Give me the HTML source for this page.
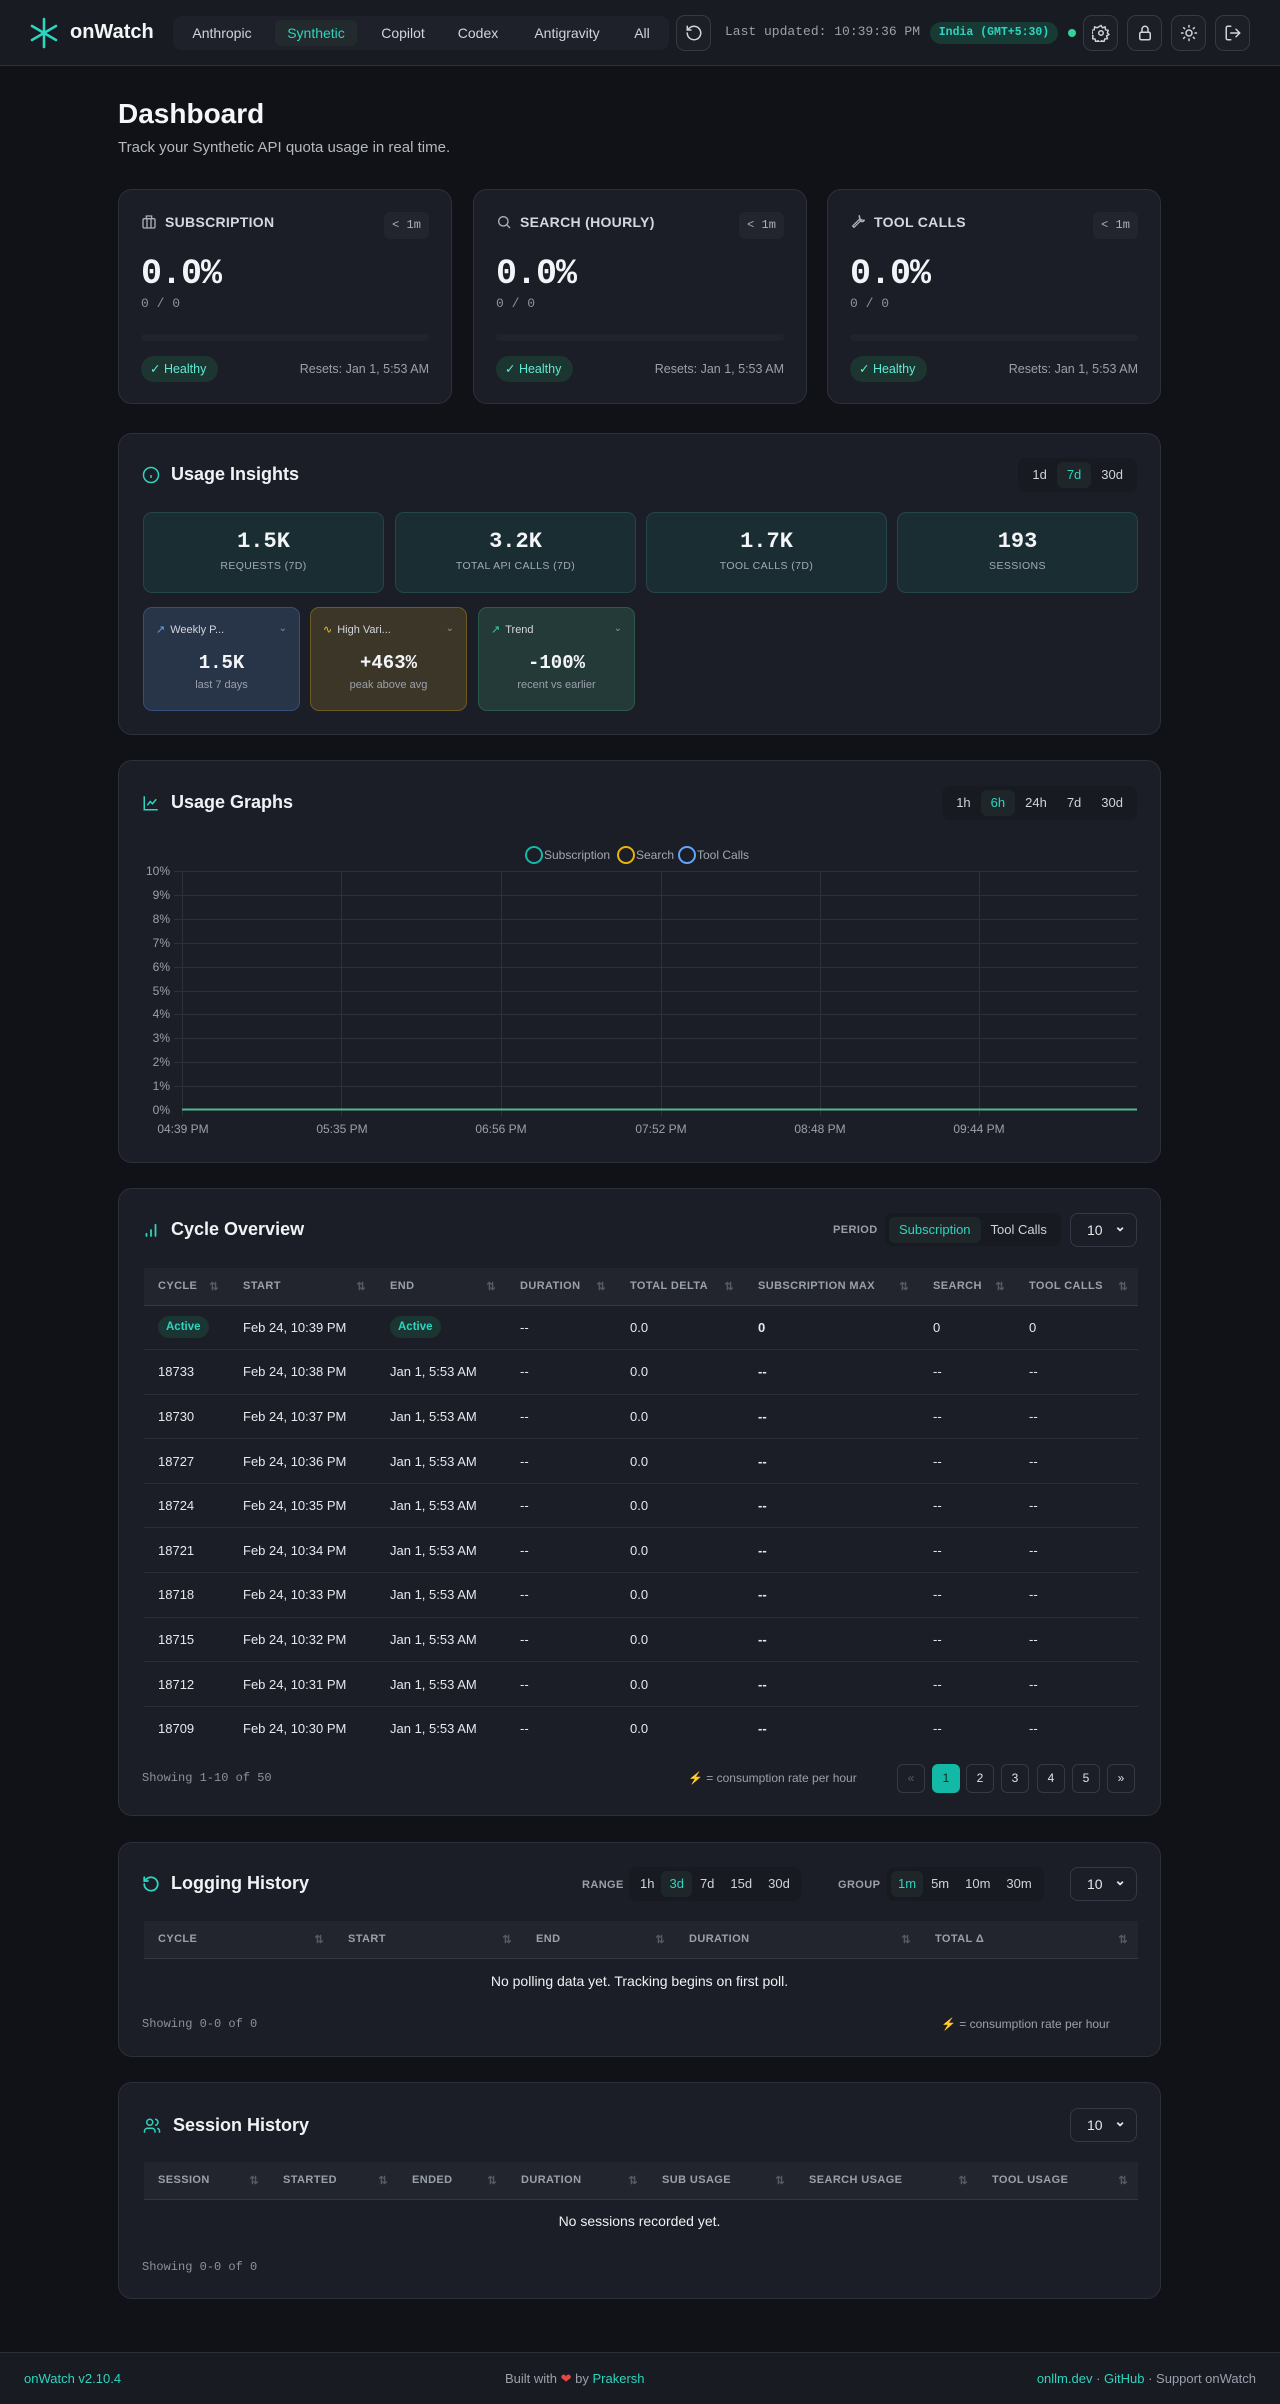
<!DOCTYPE html>
<html><head><meta charset="utf-8">
<style>
*{box-sizing:border-box;margin:0;padding:0}
body{width:1280px;height:2404px;background:#111217;font-family:"Liberation Sans",sans-serif;color:#e6e8ec;position:relative;overflow:hidden}
.mono{font-family:"Liberation Mono",monospace}
.abs{position:absolute}
header{position:absolute;left:0;top:0;width:1280px;height:66px;background:#181b22;border-bottom:1px solid #2b2f3a}
.nav{position:absolute;left:173px;top:16px;width:496px;height:34px;background:#1e2129;border-radius:8px}
.nav span{position:absolute;top:4px;height:26px;line-height:26px;font-size:14px;color:#cfd3da;transform:translateX(-50%);padding:0 12px;border-radius:6px;white-space:nowrap}
.nav span.on{background:#232a2d;color:#2dd4bf}
.ib{position:absolute;top:15px;width:35px;height:36px;border:1px solid #343946;border-radius:9px;background:#1c1f26;display:flex;align-items:center;justify-content:center}
.card{position:absolute;left:118px;width:1043px;background:#1b1e26;border:1px solid #2c303a;border-radius:14px}
.sc{position:absolute;top:189px;width:334px;height:215px;background:#1b1e26;border:1px solid #2c303a;border-radius:14px}
.sc .t{position:absolute;left:22px;top:24px;font-size:14px;font-weight:bold;color:#d3d7de;letter-spacing:.3px;display:flex;align-items:center;gap:8px}
.sc .b{position:absolute;right:22px;top:22px;width:45px;height:27px;border-radius:6px;background:#22252d;font-size:12px;color:#aab0ba;text-align:center;line-height:27px}
.sc .val{position:absolute;left:22px;top:64px;font-size:35px;font-weight:bold;color:#f2f4f7;letter-spacing:-1px}
.sc .sub{position:absolute;left:22px;top:106px;font-size:13px;color:#8b919c}
.sc .bar{position:absolute;left:22px;right:22px;top:144px;height:7px;border-radius:4px;background:#20232b}
.sc .h{position:absolute;left:22px;top:166px;height:26px;padding:0 12px 0 9px;border-radius:13px;background:#1d3530;color:#5eead4;font-size:12.5px;line-height:26px}
.sc .r{position:absolute;right:22px;top:166px;line-height:26px;font-size:12.5px;color:#9aa0aa}
.ct{position:absolute;left:23px;font-size:18px;font-weight:bold;color:#f0f2f5;display:flex;align-items:center;gap:11px}
.tabs{position:absolute;height:34px;background:#171a20;border-radius:8px;display:flex;align-items:center;padding:0 4px}
.tabs span{height:26px;line-height:26px;padding:0 10px;font-size:13px;color:#cfd3da;border-radius:6px}
.tabs span.on{background:#1f262a;color:#2dd4bf}
.mb{position:absolute;top:78px;width:241px;height:81px;background:#1a2d33;border:1px solid #24454a;border-radius:9px;text-align:center}
.mb .n{margin-top:16px;font-size:22px;font-weight:bold;color:#f3f5f7}
.mb .l{margin-top:6px;font-size:10.5px;color:#a3aab3;letter-spacing:.4px}
.sb{position:absolute;top:173px;width:157px;height:104px;border-radius:9px;text-align:center}
.sb .hd{position:absolute;left:12px;right:12px;top:15px;font-size:11px;color:#d2d6dc;text-align:left;display:flex;align-items:center;gap:5px}
.sb .hd i{position:absolute;right:0;top:0;font-style:normal;color:#8b919c;font-size:10px}
.sb .n{position:absolute;left:0;right:0;top:44px;font-size:19px;font-weight:bold;color:#f3f5f7}
.sb .l{position:absolute;left:0;right:0;top:71px;font-size:11px;color:#9aa0aa}
table{position:absolute;left:25px;border-collapse:collapse;table-layout:fixed}
th{height:37px;background:#22252e;font-size:11px;color:#9aa0ab;text-align:left;font-weight:bold;letter-spacing:.4px;padding-left:14px;position:relative;border-bottom:1px solid #333844}
th:after{content:"⇅";position:absolute;right:10px;top:12px;color:#545a66;font-size:11px}
td{height:44.6px;font-size:13px;color:#e6e8ec;padding-left:14px;border-bottom:1px solid #2a2e38}
tr:last-child td{border-bottom:none}
.act{display:inline-block;height:22px;line-height:22px;padding:0 8px;border-radius:11px;background:#1b3632;color:#2dd4bf;font-size:11.5px;font-weight:bold}
.sel{position:absolute;right:23px;width:67px;height:34px;border:1px solid #343946;border-radius:8px;font-size:14px;color:#e6e8ec;line-height:32px;padding-left:16px}
.sel:after{content:"⌄";position:absolute;right:10px;top:-4px;font-weight:bold}
.show{position:absolute;left:23px;font-size:12px;color:#8b919c}
.pg{position:absolute;top:-14px;width:28px;height:29px;border:1px solid #343946;border-radius:6px;text-align:center;line-height:27px;font-size:12px;color:#dfe2e7}
</style></head><body>

<header>
  <svg class="abs" style="left:29px;top:17px" width="30" height="32" viewBox="0 0 30 32"><g stroke="#2dd4bf" stroke-width="2.6" stroke-linecap="round"><line x1="15" y1="2" x2="15" y2="30"/><line x1="3" y1="9" x2="27" y2="23"/><line x1="3" y1="23" x2="27" y2="9"/></g></svg>
  <div class="abs" style="left:70px;top:21px;font-size:20px;font-weight:bold;color:#f4f5f7">onWatch</div>
  <div class="nav">
    <span style="left:49px">Anthropic</span>
    <span class="on" style="left:143px">Synthetic</span>
    <span style="left:230px">Copilot</span>
    <span style="left:305px">Codex</span>
    <span style="left:394px">Antigravity</span>
    <span style="left:469px">All</span>
  </div>
  <div class="ib" style="left:676px"><svg width="18" height="18" viewBox="0 0 24 24" fill="none" stroke="#cfd3da" stroke-width="2" stroke-linecap="round"><path d="M3 12a9 9 0 1 0 3-6.7L3 8"/><path d="M3 3v5h5"/></svg></div>
  <div class="abs mono" style="left:725px;top:24px;font-size:13px;color:#9aa0ab">Last updated: 10:39:36 PM</div>
  <div class="abs mono" style="left:930px;top:22px;width:128px;height:22px;border-radius:11px;background:#173a35;color:#2dd4bf;font-size:11.5px;font-weight:bold;text-align:center;line-height:22px">India (GMT+5:30)</div>
  <div class="abs" style="left:1068px;top:29px;width:8px;height:8px;border-radius:50%;background:#34d399"></div>
  <div class="ib" style="left:1083px"><svg width="18" height="18" viewBox="0 0 24 24" fill="none" stroke="#cfd3da" stroke-width="2"><circle cx="12" cy="12" r="3"/><path d="M12 2l2 3 3.5-1 .5 3.5 3.5 1-1 3.5 2 2-3 2 1 3.5-3.5.5-1 3.5-3.5-1-2 3-2-3-3.5 1-1-3.5-3.5-.5 1-3.5-3-2 2-2-1-3.5 3.5-1 .5-3.5 3.5 1z"/></svg></div>
  <div class="ib" style="left:1127px"><svg width="18" height="18" viewBox="0 0 24 24" fill="none" stroke="#cfd3da" stroke-width="2"><rect x="5" y="11" width="14" height="10" rx="2"/><path d="M8 11V7a4 4 0 0 1 8 0v4"/></svg></div>
  <div class="ib" style="left:1171px"><svg width="18" height="18" viewBox="0 0 24 24" fill="none" stroke="#cfd3da" stroke-width="2" stroke-linecap="round"><circle cx="12" cy="12" r="4"/><path d="M12 2v2M12 20v2M4.9 4.9l1.4 1.4M17.7 17.7l1.4 1.4M2 12h2M20 12h2M4.9 19.1l1.4-1.4M17.7 6.3l1.4-1.4"/></svg></div>
  <div class="ib" style="left:1215px"><svg width="18" height="18" viewBox="0 0 24 24" fill="none" stroke="#cfd3da" stroke-width="2" stroke-linecap="round"><path d="M9 21H5a2 2 0 0 1-2-2V5a2 2 0 0 1 2-2h4"/><path d="M16 17l5-5-5-5M21 12H9"/></svg></div>
</header>

<div class="abs" style="left:118px;top:98px;font-size:28px;font-weight:bold;color:#f5f6f8">Dashboard</div>
<div class="abs" style="left:118px;top:139px;font-size:15px;color:#b3b8c1">Track your Synthetic API quota usage in real time.</div>

<div class="sc" style="left:118px">
  <div class="t"><svg width="16" height="16" viewBox="0 0 24 24" fill="none" stroke="#aab0ba" stroke-width="2"><rect x="3" y="7" width="18" height="14" rx="2"/><path d="M8 7V3h8v4M9 7v14M15 7v14"/></svg>SUBSCRIPTION</div>
  <div class="b mono">&lt; 1m</div>
  <div class="val mono">0.0%</div><div class="sub mono">0 / 0</div><div class="bar"></div>
  <div class="h">✓ Healthy</div><div class="r">Resets: Jan 1, 5:53 AM</div>
</div>
<div class="sc" style="left:473px">
  <div class="t"><svg width="16" height="16" viewBox="0 0 24 24" fill="none" stroke="#aab0ba" stroke-width="2"><circle cx="11" cy="11" r="7"/><path d="M21 21l-5-5"/></svg>SEARCH (HOURLY)</div>
  <div class="b mono">&lt; 1m</div>
  <div class="val mono">0.0%</div><div class="sub mono">0 / 0</div><div class="bar"></div>
  <div class="h">✓ Healthy</div><div class="r">Resets: Jan 1, 5:53 AM</div>
</div>
<div class="sc" style="left:827px">
  <div class="t"><svg width="16" height="16" viewBox="0 0 24 24" fill="none" stroke="#aab0ba" stroke-width="2"><path d="M14.7 6.3a4 4 0 0 0 5 5L22 9a6 6 0 0 1-8-7zM14 8L4 18l2 2 10-10"/></svg>TOOL CALLS</div>
  <div class="b mono">&lt; 1m</div>
  <div class="val mono">0.0%</div><div class="sub mono">0 / 0</div><div class="bar"></div>
  <div class="h">✓ Healthy</div><div class="r">Resets: Jan 1, 5:53 AM</div>
</div>

<!-- Usage Insights -->
<div class="card" style="top:433px;height:302px">
  <div class="ct" style="top:30px"><svg width="18" height="18" viewBox="0 0 24 24" fill="none" stroke="#2dd4bf" stroke-width="2"><circle cx="12" cy="12" r="10"/><path d="M12 16v-4M12 8h0"/></svg>Usage Insights</div>
  <div class="tabs" style="right:23px;top:24px"><span>1d</span><span class="on">7d</span><span>30d</span></div>
  <div class="mb" style="left:24px"><div class="n mono">1.5K</div><div class="l">REQUESTS (7D)</div></div>
  <div class="mb" style="left:276px"><div class="n mono">3.2K</div><div class="l">TOTAL API CALLS (7D)</div></div>
  <div class="mb" style="left:527px"><div class="n mono">1.7K</div><div class="l">TOOL CALLS (7D)</div></div>
  <div class="mb" style="left:778px"><div class="n mono">193</div><div class="l">SESSIONS</div></div>
  <div class="sb" style="left:24px;background:#283448;border:1px solid #34507a">
    <div class="hd"><span style="color:#60a5fa">↗</span>Weekly P...<i>⌄</i></div><div class="n mono">1.5K</div><div class="l">last 7 days</div></div>
  <div class="sb" style="left:191px;background:#3c3629;border:1px solid #6b5a22">
    <div class="hd"><span style="color:#fbbf24">∿</span>High Vari...<i>⌄</i></div><div class="n mono">+463%</div><div class="l">peak above avg</div></div>
  <div class="sb" style="left:359px;background:#233a39;border:1px solid #2b5a4c">
    <div class="hd"><span style="color:#34d399">↗</span>Trend<i>⌄</i></div><div class="n mono">-100%</div><div class="l">recent vs earlier</div></div>
</div>

<!-- Usage Graphs -->
<div class="card" style="top:760px;height:403px">
  <div class="ct" style="top:31px"><svg width="18" height="18" viewBox="0 0 24 24" fill="none" stroke="#2dd4bf" stroke-width="2"><path d="M3 3v18h18"/><path d="M7 15l4-5 3 3 5-6"/></svg>Usage Graphs</div>
  <div class="tabs" style="right:23px;top:25px"><span>1h</span><span class="on">6h</span><span>24h</span><span>7d</span><span>30d</span></div>
  <svg class="abs" style="left:-1px;top:-1px" width="1043" height="403" viewBox="118 760 1043 403" font-family="Liberation Sans, sans-serif">
    <g font-size="12" fill="#a0a6b0">
      <circle cx="534" cy="855" r="8" fill="none" stroke="#14b8a6" stroke-width="2"/><text x="544" y="859">Subscription</text>
      <circle cx="626" cy="855" r="8" fill="none" stroke="#eab308" stroke-width="2"/><text x="636" y="859">Search</text>
      <circle cx="687" cy="855" r="8" fill="none" stroke="#60a5fa" stroke-width="2"/><text x="697" y="859">Tool Calls</text>
    </g>
    <g stroke="#2c303a" stroke-width="1">
      <line x1="174" y1="871.5" x2="1137" y2="871.5"/><line x1="174" y1="895.5" x2="1137" y2="895.5"/><line x1="174" y1="919.5" x2="1137" y2="919.5"/><line x1="174" y1="943.5" x2="1137" y2="943.5"/><line x1="174" y1="967.5" x2="1137" y2="967.5"/><line x1="174" y1="991.5" x2="1137" y2="991.5"/><line x1="174" y1="1014.5" x2="1137" y2="1014.5"/><line x1="174" y1="1038.5" x2="1137" y2="1038.5"/><line x1="174" y1="1062.5" x2="1137" y2="1062.5"/><line x1="174" y1="1086.5" x2="1137" y2="1086.5"/>
      <line x1="182.5" y1="871" x2="182.5" y2="1116"/><line x1="341.5" y1="871" x2="341.5" y2="1116"/><line x1="501.5" y1="871" x2="501.5" y2="1116"/><line x1="661.5" y1="871" x2="661.5" y2="1116"/><line x1="820.5" y1="871" x2="820.5" y2="1116"/><line x1="979.5" y1="871" x2="979.5" y2="1116"/>
    </g>
    <line x1="182" y1="1109.5" x2="1137" y2="1109.5" stroke="#4fb88f" stroke-width="2"/>
    <g font-size="12" fill="#9aa0ab" text-anchor="end">
      <text x="170" y="875">10%</text><text x="170" y="899">9%</text><text x="170" y="923">8%</text><text x="170" y="947">7%</text><text x="170" y="971">6%</text><text x="170" y="995">5%</text><text x="170" y="1018">4%</text><text x="170" y="1042">3%</text><text x="170" y="1066">2%</text><text x="170" y="1090">1%</text><text x="170" y="1114">0%</text>
    </g>
    <g font-size="12" fill="#9aa0ab" text-anchor="middle">
      <text x="183" y="1133">04:39 PM</text><text x="342" y="1133">05:35 PM</text><text x="501" y="1133">06:56 PM</text><text x="661" y="1133">07:52 PM</text><text x="820" y="1133">08:48 PM</text><text x="979" y="1133">09:44 PM</text>
    </g>
  </svg>
</div>

<!-- Cycle Overview -->
<div class="card" style="top:1188px;height:628px">
  <div class="ct" style="top:30px"><svg width="18" height="18" viewBox="0 0 24 24" fill="none" stroke="#2dd4bf" stroke-width="2.4" stroke-linecap="round"><path d="M6 20v-3M12 20v-8M18 20V5"/></svg>Cycle Overview</div>
  <div class="abs" style="left:714px;top:35px;font-size:11px;font-weight:bold;color:#9aa0ab;letter-spacing:.4px">PERIOD</div>
  <div class="tabs" style="left:766px;top:24px;height:33px"><span class="on">Subscription</span><span>Tool Calls</span></div>
  <div class="sel" style="top:24px">10</div>
  <table style="top:79px;width:994px">
    <colgroup><col style="width:85px"><col style="width:147px"><col style="width:130px"><col style="width:110px"><col style="width:128px"><col style="width:175px"><col style="width:96px"><col style="width:123px"></colgroup>
    <tr><th>CYCLE</th><th>START</th><th>END</th><th>DURATION</th><th>TOTAL DELTA</th><th>SUBSCRIPTION MAX</th><th>SEARCH</th><th>TOOL CALLS</th></tr>
    <tr><td><span class="act">Active</span></td><td>Feb 24, 10:39 PM</td><td><span class="act">Active</span></td><td>--</td><td>0.0</td><td><b>0</b></td><td>0</td><td>0</td></tr>
    <tr><td>18733</td><td>Feb 24, 10:38 PM</td><td>Jan 1, 5:53 AM</td><td>--</td><td>0.0</td><td><b>--</b></td><td>--</td><td>--</td></tr>
    <tr><td>18730</td><td>Feb 24, 10:37 PM</td><td>Jan 1, 5:53 AM</td><td>--</td><td>0.0</td><td><b>--</b></td><td>--</td><td>--</td></tr>
    <tr><td>18727</td><td>Feb 24, 10:36 PM</td><td>Jan 1, 5:53 AM</td><td>--</td><td>0.0</td><td><b>--</b></td><td>--</td><td>--</td></tr>
    <tr><td>18724</td><td>Feb 24, 10:35 PM</td><td>Jan 1, 5:53 AM</td><td>--</td><td>0.0</td><td><b>--</b></td><td>--</td><td>--</td></tr>
    <tr><td>18721</td><td>Feb 24, 10:34 PM</td><td>Jan 1, 5:53 AM</td><td>--</td><td>0.0</td><td><b>--</b></td><td>--</td><td>--</td></tr>
    <tr><td>18718</td><td>Feb 24, 10:33 PM</td><td>Jan 1, 5:53 AM</td><td>--</td><td>0.0</td><td><b>--</b></td><td>--</td><td>--</td></tr>
    <tr><td>18715</td><td>Feb 24, 10:32 PM</td><td>Jan 1, 5:53 AM</td><td>--</td><td>0.0</td><td><b>--</b></td><td>--</td><td>--</td></tr>
    <tr><td>18712</td><td>Feb 24, 10:31 PM</td><td>Jan 1, 5:53 AM</td><td>--</td><td>0.0</td><td><b>--</b></td><td>--</td><td>--</td></tr>
    <tr><td>18709</td><td>Feb 24, 10:30 PM</td><td>Jan 1, 5:53 AM</td><td>--</td><td>0.0</td><td><b>--</b></td><td>--</td><td>--</td></tr>
  </table>
  <div class="show mono" style="top:582px">Showing 1-10 of 50</div>
  <div class="abs" style="left:569px;top:582px;font-size:12px;color:#9aa0ab"><span style="color:#facc15">⚡</span> = consumption rate per hour</div>
  <div class="abs" style="left:0;top:589px">
    <div class="pg" style="left:778px;color:#555b66">«</div>
    <div class="pg" style="left:813px;background:#14b8a6;border-color:#14b8a6;color:#0d2a27">1</div>
    <div class="pg" style="left:847px">2</div>
    <div class="pg" style="left:882px">3</div>
    <div class="pg" style="left:918px">4</div>
    <div class="pg" style="left:953px">5</div>
    <div class="pg" style="left:988px">»</div>
  </div>
</div>

<!-- Logging History -->
<div class="card" style="top:1842px;height:215px">
  <div class="ct" style="top:30px"><svg width="18" height="18" viewBox="0 0 24 24" fill="none" stroke="#2dd4bf" stroke-width="2.4" stroke-linecap="round"><path d="M3 12a9 9 0 1 0 3-6.7L3 8"/><path d="M3 3v5h5"/></svg>Logging History</div>
  <div class="abs" style="left:463px;top:36px;font-size:11px;font-weight:bold;color:#9aa0ab;letter-spacing:.4px">RANGE</div>
  <div class="tabs" style="left:510px;top:24px"><span style="padding:0 7px">1h</span><span class="on" style="padding:0 8px">3d</span><span style="padding:0 8px">7d</span><span style="padding:0 8px">15d</span><span style="padding:0 8px">30d</span></div>
  <div class="abs" style="left:719px;top:36px;font-size:11px;font-weight:bold;color:#9aa0ab;letter-spacing:.4px">GROUP</div>
  <div class="tabs" style="left:768px;top:24px"><span class="on" style="padding:0 7px">1m</span><span style="padding:0 8px">5m</span><span style="padding:0 8px">10m</span><span style="padding:0 8px">30m</span></div>
  <div class="sel" style="top:24px">10</div>
  <table style="top:78px;width:994px">
    <colgroup><col style="width:190px"><col style="width:188px"><col style="width:153px"><col style="width:246px"><col style="width:217px"></colgroup>
    <tr><th>CYCLE</th><th>START</th><th>END</th><th>DURATION</th><th>TOTAL Δ</th></tr>
  </table>
  <div class="abs" style="left:0;right:0;top:130px;text-align:center;font-size:14px;color:#eef0f3">No polling data yet. Tracking begins on first poll.</div>
  <div class="show mono" style="top:174px">Showing 0-0 of 0</div>
  <div class="abs" style="left:822px;top:174px;font-size:12px;color:#9aa0ab"><span style="color:#facc15">⚡</span> = consumption rate per hour</div>
</div>

<!-- Session History -->
<div class="card" style="top:2082px;height:217px">
  <div class="ct" style="top:32px"><svg width="20" height="18" viewBox="0 0 24 24" fill="none" stroke="#2dd4bf" stroke-width="2"><circle cx="9" cy="7" r="4"/><path d="M2 21v-2a4 4 0 0 1 4-4h6a4 4 0 0 1 4 4v2M16 3a4 4 0 0 1 0 8M22 21v-2a4 4 0 0 0-3-3.9"/></svg>Session History</div>
  <div class="sel" style="top:25px">10</div>
  <table style="top:79px;width:994px">
    <colgroup><col style="width:125px"><col style="width:129px"><col style="width:109px"><col style="width:141px"><col style="width:147px"><col style="width:183px"><col style="width:160px"></colgroup>
    <tr><th>SESSION</th><th>STARTED</th><th>ENDED</th><th>DURATION</th><th>SUB USAGE</th><th>SEARCH USAGE</th><th>TOOL USAGE</th></tr>
  </table>
  <div class="abs" style="left:0;right:0;top:130px;text-align:center;font-size:14px;color:#eef0f3">No sessions recorded yet.</div>
  <div class="show mono" style="top:177px">Showing 0-0 of 0</div>
</div>

<footer class="abs" style="left:0;top:2352px;width:1280px;height:52px;background:#181b22;border-top:1px solid #2b2f3a;font-size:13px">
  <div class="abs" style="left:24px;top:18px;color:#2dd4bf">onWatch v2.10.4</div>
  <div class="abs" style="left:505px;top:18px;color:#9aa0ab">Built with <span style="color:#ef4444">❤</span> by <span style="color:#2dd4bf">Prakersh</span></div>
  <div class="abs" style="right:24px;top:18px;color:#9aa0ab"><span style="color:#2dd4bf">onllm.dev</span> · <span style="color:#2dd4bf">GitHub</span> · Support onWatch</div>
</footer>
</body></html>
